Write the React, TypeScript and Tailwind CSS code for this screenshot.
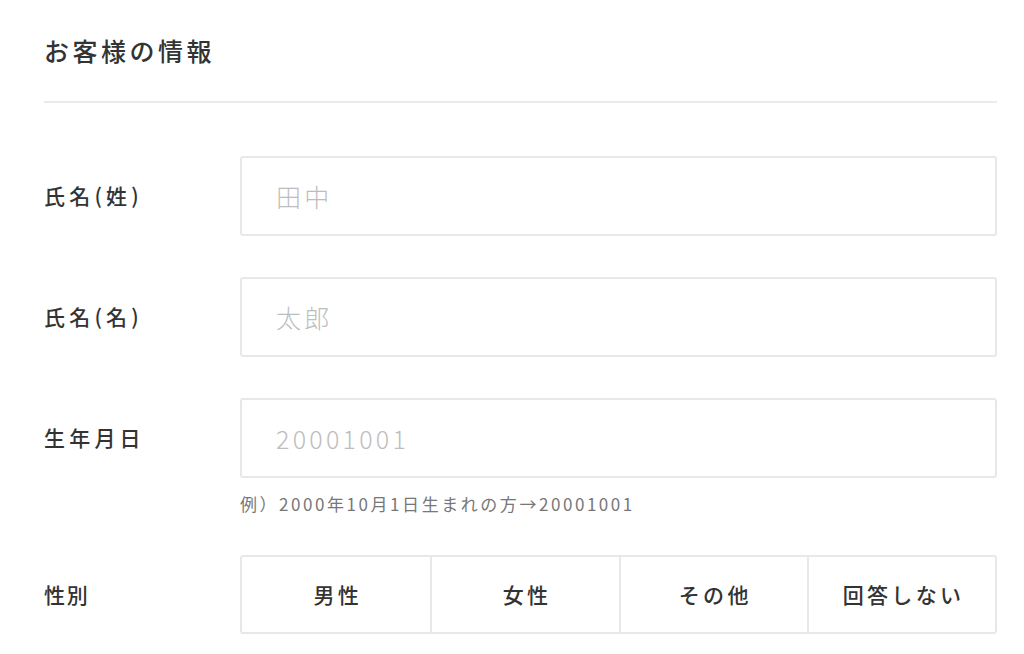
const font = {
  fontFamily: '"Noto Sans CJK JP", "Noto Sans", sans-serif',
};

const fields = [
  { label: "氏名(姓)", placeholder: "田中" },
  { label: "氏名(名)", placeholder: "太郎" },
  { label: "生年月日", placeholder: "20001001" },
];

const genders = ["男性", "女性", "その他", "回答しない"];

export default function App() {
  return (
    <div
      className="min-h-[654px] bg-white pl-[44px] pr-[27px] text-[#333]"
      style={font}
    >
      {/* Section title */}
      <h2 className="pt-[34px] pb-[35px] text-[25px] font-medium leading-[32px] tracking-[0.14em] text-[#333]">
        お客様の情報
      </h2>
      <div className="h-[2px] bg-[#ebebeb]" />

      <div className="pt-[53px]">
        {fields.map((f, i) => (
          <div key={f.label} className={i > 0 ? "mt-[41px]" : ""}>
            <div className="flex items-center">
              <label className="w-[196px] shrink-0 text-[21px] font-medium tracking-[0.2em]">
                {f.label}
              </label>
              <input
                type="text"
                placeholder={f.placeholder}
                className="h-[80px] flex-1 rounded-[3px] border-2 border-[#e8e8e8] bg-white px-[34px] text-[25px] font-light tracking-[0.13em] outline-none placeholder:text-[#bdbdbd]"
              />
            </div>
            {i === 2 && (
              <p className="ml-[196px] mt-[15px] text-[17px] leading-[22px] tracking-[0.15em] text-[#777]">
                例）2000年10月1日生まれの方→20001001
              </p>
            )}
          </div>
        ))}

        {/* Gender */}
        <div className="mt-[40px] flex items-center">
          <span className="w-[196px] shrink-0 text-[21px] font-medium tracking-[0.08em]">
            性別
          </span>
          <div className="grid h-[79px] flex-1 grid-cols-4 rounded-[3px] border-2 border-[#e8e8e8]">
            {genders.map((g, i) => (
              <button
                key={g}
                type="button"
                className={`flex items-center justify-center pl-[0.16em] text-[21px] font-medium tracking-[0.16em] text-[#333] ${
                  i > 0 ? "border-l-2 border-[#e8e8e8]" : ""
                }`}
              >
                {g}
              </button>
            ))}
          </div>
        </div>
      </div>
    </div>
  );
}
